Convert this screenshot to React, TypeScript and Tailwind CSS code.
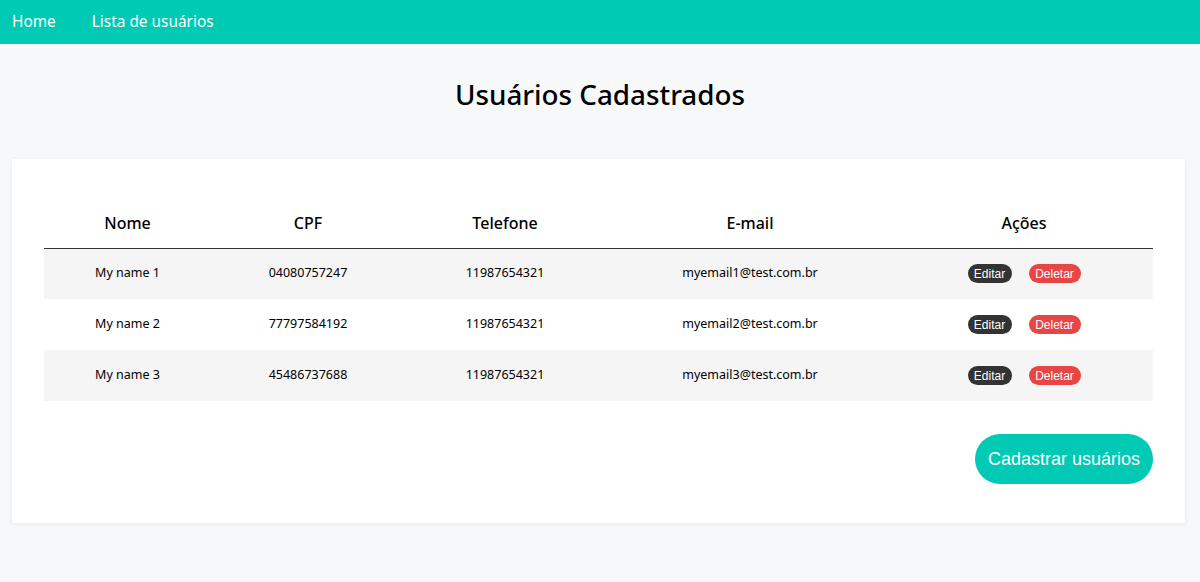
import React from "react";

const users = [
  { name: "My name 1", cpf: "04080757247", tel: "11987654321", email: "myemail1@test.com.br" },
  { name: "My name 2", cpf: "77797584192", tel: "11987654321", email: "myemail2@test.com.br" },
  { name: "My name 3", cpf: "45486737688", tel: "11987654321", email: "myemail3@test.com.br" },
];

export default function App() {
  return (
    <div className="min-h-[582px] bg-[#f7f8fa] font-['Noto_Sans',sans-serif] text-black">
      <nav className="flex h-[44px] items-center bg-[#00c9b4] px-3 text-[15.4px] text-white">
        <a className="mr-[36px]">Home</a>
        <a>Lista de usuários</a>
      </nav>
      <h1 className="mt-[32px] text-center text-[27.8px] font-medium leading-[36px]">Usuários Cadastrados</h1>
      <div className="ml-3 mr-[15px] mt-[47px] bg-white px-8 pb-[39px] pt-[40px] shadow-[0_1px_4px_rgba(0,0,0,0.08)]">
        <table className="w-full border-collapse">
          <thead>
            <tr className="h-[49px] border-b border-[#333]">
              <th className="w-[167px] text-[16px] font-medium">Nome</th>
              <th className="w-[194px] text-[16px] font-medium">CPF</th>
              <th className="w-[200px] text-[16px] font-medium">Telefone</th>
              <th className="w-[290px] text-[16px] font-medium">E-mail</th>
              <th className="text-[16px] font-medium">Ações</th>
            </tr>
          </thead>
          <tbody>
            {users.map((u, i) => (
              <tr key={u.name} className={`h-[51px] text-center text-[12.5px] ${i % 2 === 0 ? "bg-[#f5f5f5]" : "bg-white"}`}>
                <td>{u.name}</td>
                <td>{u.cpf}</td>
                <td>{u.tel}</td>
                <td>{u.email}</td>
                <td>
                  <div className="flex items-center justify-center gap-[17px] font-['Liberation_Sans',Arial,sans-serif] text-[12px] text-white">
                    <button className="h-[19px] w-[44px] rounded-full bg-[#333333]">Editar</button>
                    <button className="h-[19px] w-[52px] rounded-full bg-[#e84545]">Deletar</button>
                  </div>
                </td>
              </tr>
            ))}
          </tbody>
        </table>
        <div className="mt-[33px] flex justify-end">
          <button className="h-[50px] w-[178px] rounded-full bg-[#00c9b4] font-['Liberation_Sans',Arial,sans-serif] text-[18px] text-white">
            Cadastrar usuários
          </button>
        </div>
      </div>
    </div>
  );
}
